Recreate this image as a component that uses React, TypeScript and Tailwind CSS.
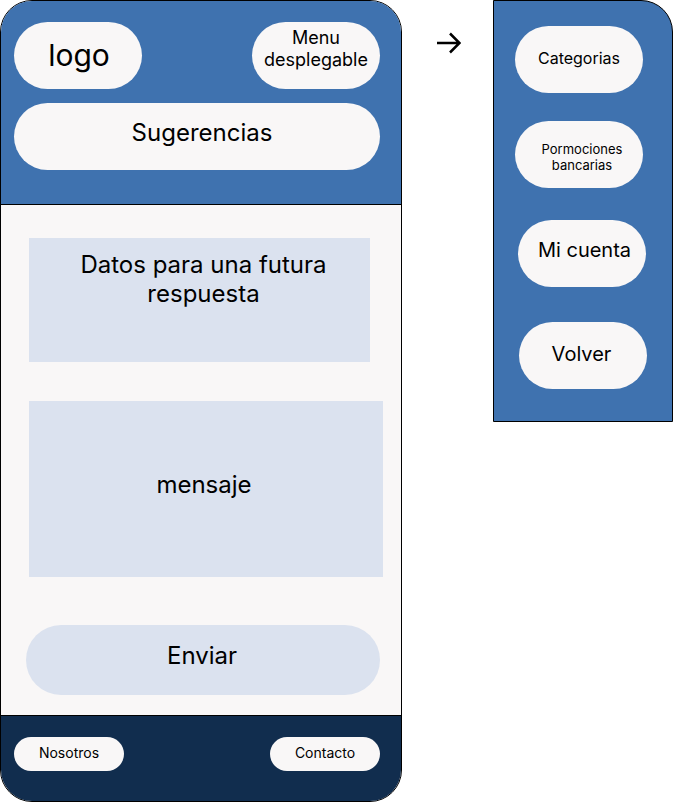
import type { ReactNode } from "react";

const pill = "flex justify-center rounded-full bg-[#f9f7f7] text-center";

function Arrow() {
  return (
    <svg viewBox="0 0 24 22" className="h-[22px] w-6" fill="none" stroke="#000" strokeWidth="2.5" aria-hidden="true">
      <path d="M0 11H22.5M13 1.5L22.5 11L13 20.5" />
    </svg>
  );
}

function MenuItem({ className, children }: { className: string; children: ReactNode }) {
  return (
    <button type="button" className={`${pill} h-[67px] w-32 items-center ${className}`}>
      {children}
    </button>
  );
}

function FooterLink({ children }: { children: ReactNode }) {
  return (
    <a
      href="#"
      className="flex h-[34px] w-[110px] items-center justify-center rounded-full bg-[#f9f7f7] pb-[2px] text-sm"
    >
      {children}
    </a>
  );
}

export default function App() {
  return (
    <div className="grid grid-cols-[minmax(0,1fr)_91px_180px] items-start bg-white font-['Inter',sans-serif] text-black">
      <div className="overflow-hidden rounded-[32px] border border-black bg-[#f9f7f7]">
        <header className="flex flex-col gap-[14px] border-b border-black bg-[#3f72af] pt-[21px] pr-[21px] pb-[34px] pl-[13px]">
          <div className="flex justify-between">
            <a href="#" className={`${pill} h-[67px] w-32 items-center pb-[2px] pl-[2px] text-3xl`}>
              logo
            </a>
            <button type="button" className={`${pill} h-[67px] w-32 items-start pt-[5px] text-lg leading-[22px]`}>
              Menu
              <br />
              desplegable
            </button>
          </div>
          <h1 className={`${pill} h-[67px] items-start pt-[15px] pl-[10px] text-2xl leading-[29px]`}>
            Sugerencias
          </h1>
        </header>

        <form className="flex flex-col pt-[33px] pr-[18px] pb-5 pl-[25px]">
          <textarea
            aria-label="Datos para una futura respuesta"
            placeholder="Datos para una futura respuesta"
            className="mr-[13px] ml-[3px] block h-[124px] resize-none bg-[#dbe2ef] pt-3 pr-4 pl-6 text-center text-2xl leading-[29px] outline-none placeholder:text-black"
          />
          <textarea
            aria-label="mensaje"
            placeholder="mensaje"
            className="mt-[39px] ml-[3px] block h-[176px] resize-none bg-[#dbe2ef] pt-[69px] pr-5 pl-4 text-center text-2xl leading-[29px] outline-none placeholder:text-black"
          />
          <button
            type="submit"
            className="mt-12 mr-[3px] flex h-[70px] items-start justify-center rounded-full bg-[#dbe2ef] pt-4 pr-[2px] text-2xl leading-[29px]"
          >
            Enviar
          </button>
        </form>

        <footer className="flex justify-between border-t border-black bg-[#112d4e] pt-[21px] pr-[21px] pb-[30px] pl-[13px]">
          <FooterLink>Nosotros</FooterLink>
          <FooterLink>Contacto</FooterLink>
        </footer>
      </div>

      <div className="flex justify-center pt-8 pl-[2px]">
        <Arrow />
      </div>

      <nav className="flex flex-col items-start rounded-tr-[32px] border border-black bg-[#3f72af] pt-[25px] pb-8 pl-[21px]">
        <MenuItem className="pb-[3px] text-base">Categorias</MenuItem>
        <MenuItem className="mt-7 pt-[5px] pl-[6px] text-[13px] leading-4">
          Pormociones
          <br />
          bancarias
        </MenuItem>
        <MenuItem className="mt-8 ml-[3px] pb-2 pl-[5px] text-xl leading-6">Mi cuenta</MenuItem>
        <MenuItem className="mt-[35px] ml-1 pr-[3px] pb-1 text-xl leading-6">Volver</MenuItem>
      </nav>
    </div>
  );
}
